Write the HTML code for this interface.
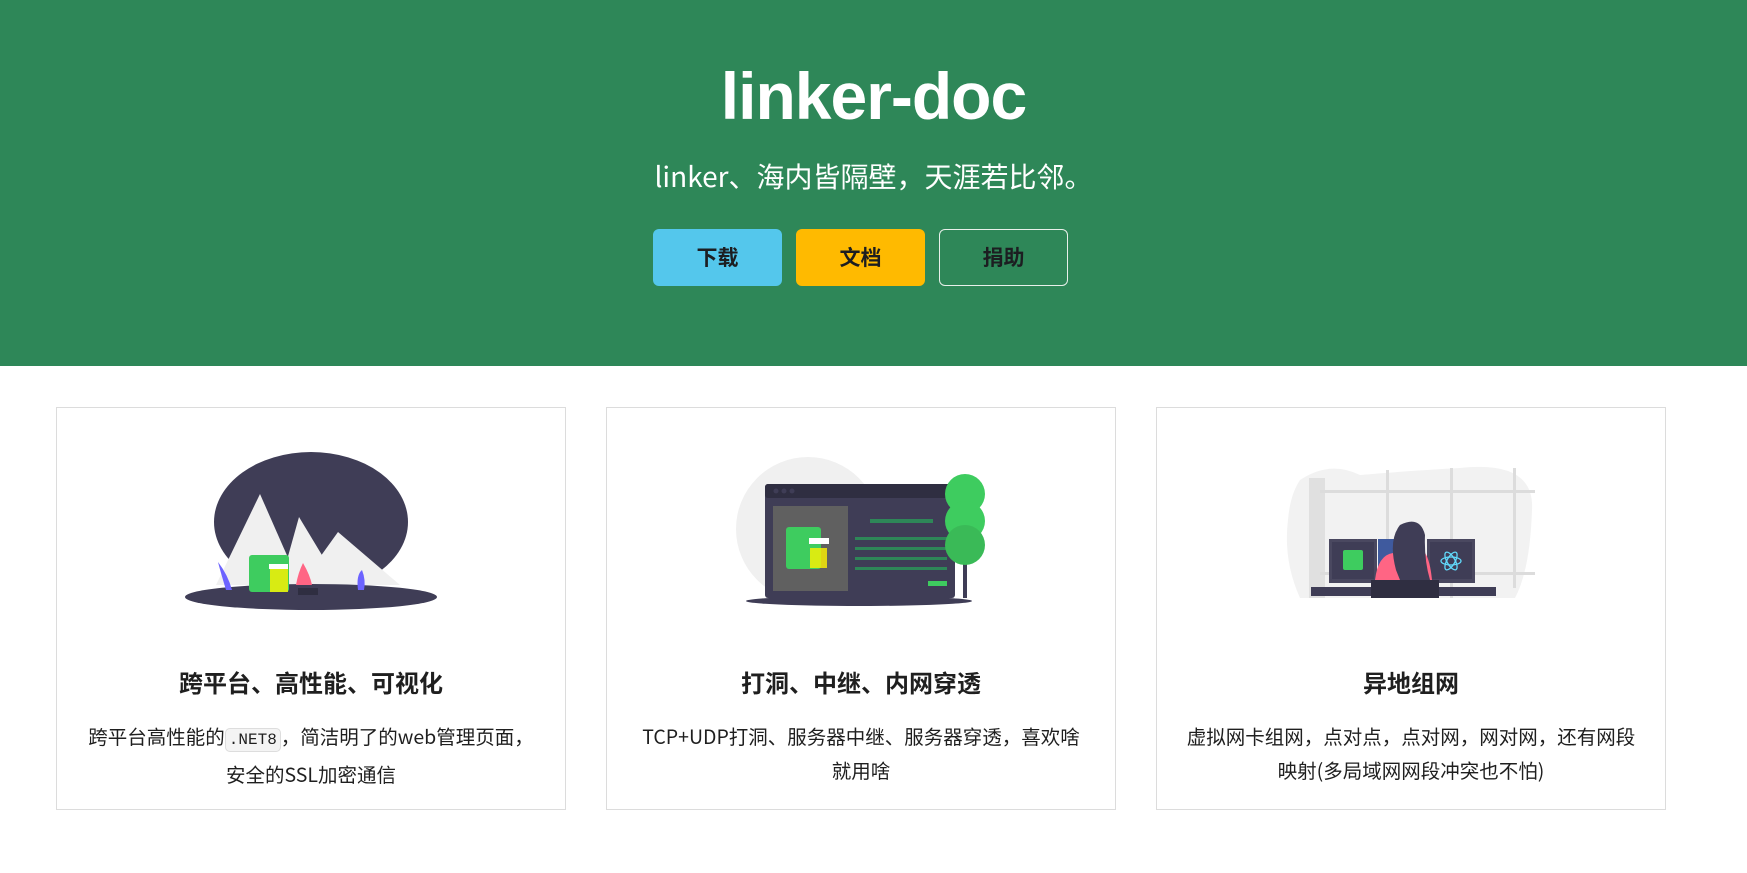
<!DOCTYPE html>
<html><head><meta charset="utf-8"><style>
*{margin:0;padding:0;box-sizing:border-box}
body{width:1747px;height:873px;position:relative;background:#fff;font-family:"Noto Sans CJK SC","Liberation Sans",sans-serif;color:#1f1f1f;overflow:hidden}
.hero{position:absolute;left:0;top:0;width:1747px;height:366px;background:#2e8758;color:#fff;text-align:center}
.hero h1{position:absolute;top:56px;width:100%;font-family:"Liberation Sans",sans-serif;font-size:66px;font-weight:bold;line-height:80px;letter-spacing:-1px}
.hero p{position:absolute;top:156px;width:100%;font-size:28px;line-height:40px}
.btn{position:absolute;top:229px;width:129px;height:57px;border-radius:6px;font-size:21px;font-weight:bold;line-height:57px;text-align:center;color:#1c1e21}
.card{position:absolute;top:407px;height:403px;border:1px solid #dcdcdc;text-align:center}
.t{position:absolute;width:100%;text-align:center}
.card .h{top:256px;font-size:24px;font-weight:bold;line-height:36px}
.card .d{top:311px;font-size:19.5px;line-height:34px;padding:0 30px}
code{font-family:"Liberation Mono",monospace;font-size:16px;background:#f4f4f4;border:1px solid #ddd;border-radius:5px;padding:2px 3px}
</style></head><body>
<div class="hero">
<h1>linker-doc</h1>
<p>linker、海内皆隔壁，天涯若比邻。</p>
</div>
<div class="btn" style="left:653px;background:#54c7ec">下载</div>
<div class="btn" style="left:796px;background:#ffba00">文档</div>
<div class="btn" style="left:939px;border:1px solid #e8f0ea;color:#1c1e21;line-height:55px">捐助</div>

<div class="card" style="left:56px;width:510px"><div class="t h">跨平台、高性能、可视化</div><div class="t d">跨平台高性能的<code>.NET8</code>，简洁明了的web管理页面，安全的SSL加密通信</div></div>
<div class="card" style="left:606px;width:510px"><div class="t h">打洞、中继、内网穿透</div><div class="t d">TCP+UDP打洞、服务器中继、服务器穿透，喜欢啥就用啥</div></div>
<div class="card" style="left:1156px;width:510px"><div class="t h">异地组网</div><div class="t d" style="padding:0 24px">虚拟网卡组网，点对点，点对网，网对网，还有网段映射(多局域网网段冲突也不怕)</div></div>

<svg style="position:absolute;left:0;top:0" width="1747" height="873" viewBox="0 0 1747 873">
<ellipse cx="311" cy="522" rx="97" ry="70" fill="#3f3d56"/>
<polygon points="216,585 260,494 300,585" fill="#f0f0f0"/>
<polygon points="280,585 299,517 340,585" fill="#f0f0f0"/>
<polygon points="300,585 338,532 400,585" fill="#f0f0f0"/>
<ellipse cx="311" cy="597" rx="126" ry="13" fill="#3f3d56"/>
<path d="M226,590 Q220,570 218,562 Q228,575 232,590Z" fill="#6c63ff"/>
<path d="M358,590 Q356,575 362,570 Q366,580 364,590Z" fill="#6c63ff"/>
<rect x="249" y="555" width="40" height="37" rx="3" fill="#3ecc5f"/>
<rect x="270" y="566" width="18" height="26" fill="#fff200" opacity=".8"/>
<rect x="269" y="564" width="19" height="5" fill="#fff"/>
<path d="M303,563 Q310,575 312,585 L296,585 Q298,573 303,563Z" fill="#ff6584"/>
<rect x="298" y="588" width="20" height="7" fill="#2f2e41"/>
<circle cx="808" cy="529" r="72" fill="#f0f0f0"/>
<ellipse cx="859" cy="601" rx="113" ry="5" fill="#3f3d56"/>
<rect x="765" y="484" width="190" height="114" rx="3" fill="#3f3d56"/>
<rect x="765" y="484" width="190" height="14" rx="3" fill="#2f2e41"/>
<circle cx="776" cy="491" r="2.5" fill="#3f3d56"/><circle cx="784" cy="491" r="2.5" fill="#3f3d56"/><circle cx="792" cy="491" r="2.5" fill="#3f3d56"/>
<rect x="773" y="506" width="75" height="85" fill="#606060"/>
<rect x="786" y="527" width="35" height="42" rx="3" fill="#3ecc5f"/>
<rect x="810" y="548" width="17" height="20" fill="#fff200" opacity=".8"/>
<rect x="809" y="538" width="20" height="6" fill="#fff"/>
<rect x="870" y="519" width="63" height="4" fill="#2e8758"/>
<rect x="855" y="537" width="92" height="3" fill="#2e8758"/>
<rect x="855" y="547" width="92" height="3" fill="#2e8758"/>
<rect x="855" y="557" width="92" height="3" fill="#2e8758"/>
<rect x="855" y="567" width="92" height="3" fill="#2e8758"/>
<rect x="928" y="581" width="19" height="5" fill="#3ecc5f"/>
<rect x="963" y="550" width="4" height="48" fill="#3f3d56"/>
<circle cx="965" cy="494" r="20" fill="#3ecc5f"/>
<circle cx="965" cy="521" r="20" fill="#3ecc5f"/>
<circle cx="965" cy="545" r="20" fill="#3aba57"/>
<path d="M1300,480 Q1330,460 1360,475 Q1420,470 1460,468 Q1535,460 1532,510 Q1530,570 1515,598 L1300,598 Q1283,560 1288,520 Q1290,495 1300,480Z" fill="#f2f2f2"/>
<rect x="1309" y="478" width="16" height="120" fill="#e0e0e0"/>
<rect x="1320" y="490" width="215" height="3" fill="#dcdcdc"/>
<rect x="1386" y="470" width="3" height="128" fill="#dcdcdc"/>
<rect x="1450" y="468" width="3" height="130" fill="#dcdcdc"/>
<rect x="1513" y="468" width="3" height="120" fill="#dcdcdc"/>
<rect x="1320" y="572" width="215" height="3" fill="#dcdcdc"/>
<rect x="1329" y="539" width="48" height="44" fill="#4a4860"/><rect x="1332" y="542" width="42" height="37" fill="#3f3d56"/>
<rect x="1378" y="539" width="46" height="44" fill="#3f5a9e"/>
<rect x="1427" y="539" width="48" height="44" fill="#4a4860"/><rect x="1430" y="542" width="42" height="37" fill="#3f3d56"/>
<rect x="1343" y="550" width="20" height="20" rx="2" fill="#3ecc5f"/>
<ellipse cx="1451" cy="561" rx="10" ry="4" fill="none" stroke="#61dafb" stroke-width="1.3"/>
<ellipse cx="1451" cy="561" rx="10" ry="4" fill="none" stroke="#61dafb" stroke-width="1.3" transform="rotate(60 1451 561)"/>
<ellipse cx="1451" cy="561" rx="10" ry="4" fill="none" stroke="#61dafb" stroke-width="1.3" transform="rotate(-60 1451 561)"/>
<path d="M1375,580 Q1378,555 1393,553 L1425,553 Q1430,560 1432,580Z" fill="#ff6584"/>
<path d="M1396,570 Q1388,540 1400,525 Q1420,515 1425,535 Q1424,560 1430,580 L1400,580Z" fill="#3f3d56"/>
<rect x="1311" y="587" width="185" height="9" fill="#3f3d56"/>
<rect x="1371" y="580" width="68" height="18" fill="#2f2e41"/>
</svg>
</body></html>
